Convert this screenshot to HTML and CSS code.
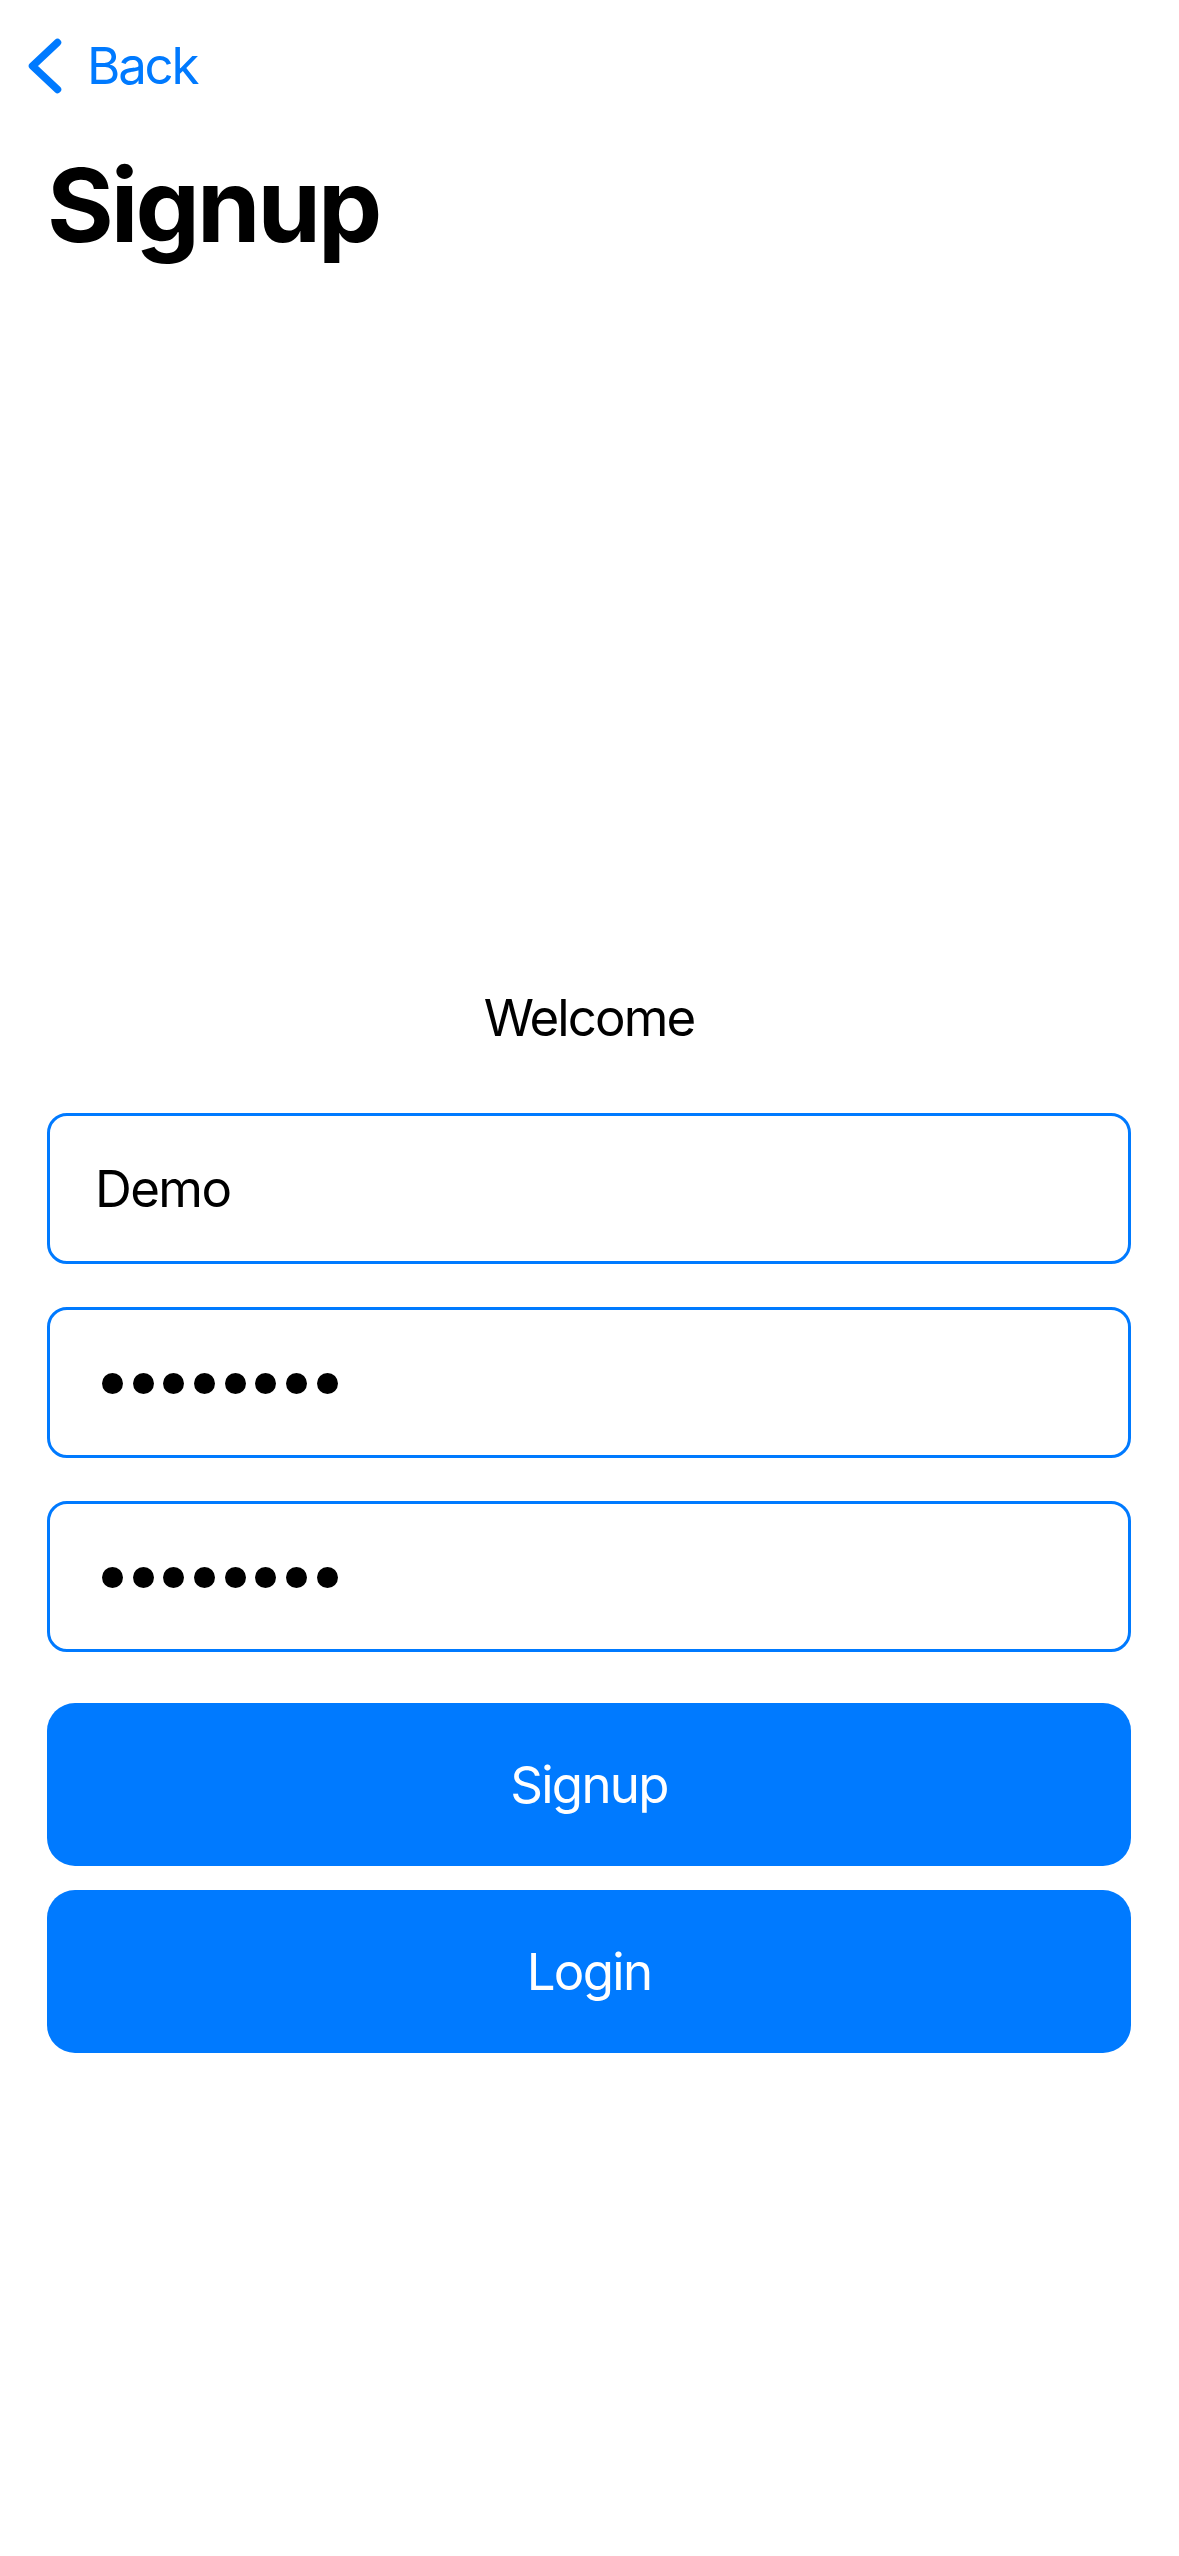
FILE: index.html
```html
<!DOCTYPE html>
<html lang="en">
<head>
<meta charset="utf-8">
<title>Signup</title>
<link rel="stylesheet" href="styles.css">
</head>
<body>
<div class="screen">
  <nav class="nav">
    <svg class="chevron" width="34" height="56" viewBox="0 0 34 56" aria-hidden="true">
      <polyline points="29.5,4.5 4.5,28 29.5,51.5" fill="none" stroke="#007AFF" stroke-width="7.5" stroke-linecap="round" stroke-linejoin="round"/>
    </svg>
    <span class="back-label">Back</span>
  </nav>
  <h1 class="title">Signup</h1>

  <main class="form">
    <p class="welcome">Welcome</p>
    <div class="fields">
      <div class="field"><span class="field-text">Demo</span></div>
      <div class="field"><span class="dots" aria-label="password"><i></i><i></i><i></i><i></i><i></i><i></i><i></i><i></i></span></div>
      <div class="field"><span class="dots" aria-label="confirm password"><i></i><i></i><i></i><i></i><i></i><i></i><i></i><i></i></span></div>
    </div>
    <div class="actions">
      <button class="btn">Signup</button>
      <button class="btn">Login</button>
    </div>
  </main>
</div>
</body>
</html>
```

FILE: styles.css
```css
* {
  box-sizing: border-box;
}

html, body {
  margin: 0;
  padding: 0;
  background: #ffffff;
}

body {
  font-family: Inter, "Noto Sans", "Liberation Sans", sans-serif;
  color: #000000;
  width: 1179px;
  min-height: 2556px;
}

.screen {
  display: flex;
  flex-direction: column;
}

.nav {
  display: flex;
  align-items: center;
  padding: 35px 0 0 28px;
  height: 96px;
}

.chevron {
  display: block;
  flex: none;
}

.back-label {
  margin-left: 25px;
  font-size: 51px;
  line-height: 61px;
  color: #007AFF;
  letter-spacing: -2.2px;
}

.title {
  margin: 48px 0 0 0;
  padding-left: 47px;
  font-size: 102px;
  line-height: 123px;
  font-weight: 700;
  letter-spacing: -3px;
}

.form {
  margin-top: 720px;
  padding: 0 48px 0 47px;
  display: flex;
  flex-direction: column;
}

.welcome {
  margin: 0;
  text-align: center;
  font-size: 51px;
  line-height: 61px;
  letter-spacing: -1.9px;
}

.fields {
  margin-top: 65px;
  display: flex;
  flex-direction: column;
  gap: 43px;
}

.field {
  height: 151px;
  border: 3px solid #007AFF;
  border-radius: 20px;
  display: flex;
  align-items: center;
  padding: 0 45px;
}

.field-text {
  font-size: 51px;
  line-height: 61px;
  letter-spacing: -1.6px;
}

.dots {
  display: flex;
  gap: 9.7px;
  margin-left: 7px;
  margin-top: 2px;
}

.dots i {
  display: block;
  width: 21px;
  height: 21px;
  border-radius: 50%;
  background: #000000;
}

.actions {
  margin-top: 51px;
  display: flex;
  flex-direction: column;
  gap: 24px;
}

.btn {
  height: 163px;
  border: none;
  border-radius: 28px;
  background: #007AFF;
  color: #ffffff;
  font-family: Inter, "Noto Sans", "Liberation Sans", sans-serif;
  font-size: 51px;
  line-height: 61px;
  letter-spacing: -1.7px;
  padding: 0;
}
```
